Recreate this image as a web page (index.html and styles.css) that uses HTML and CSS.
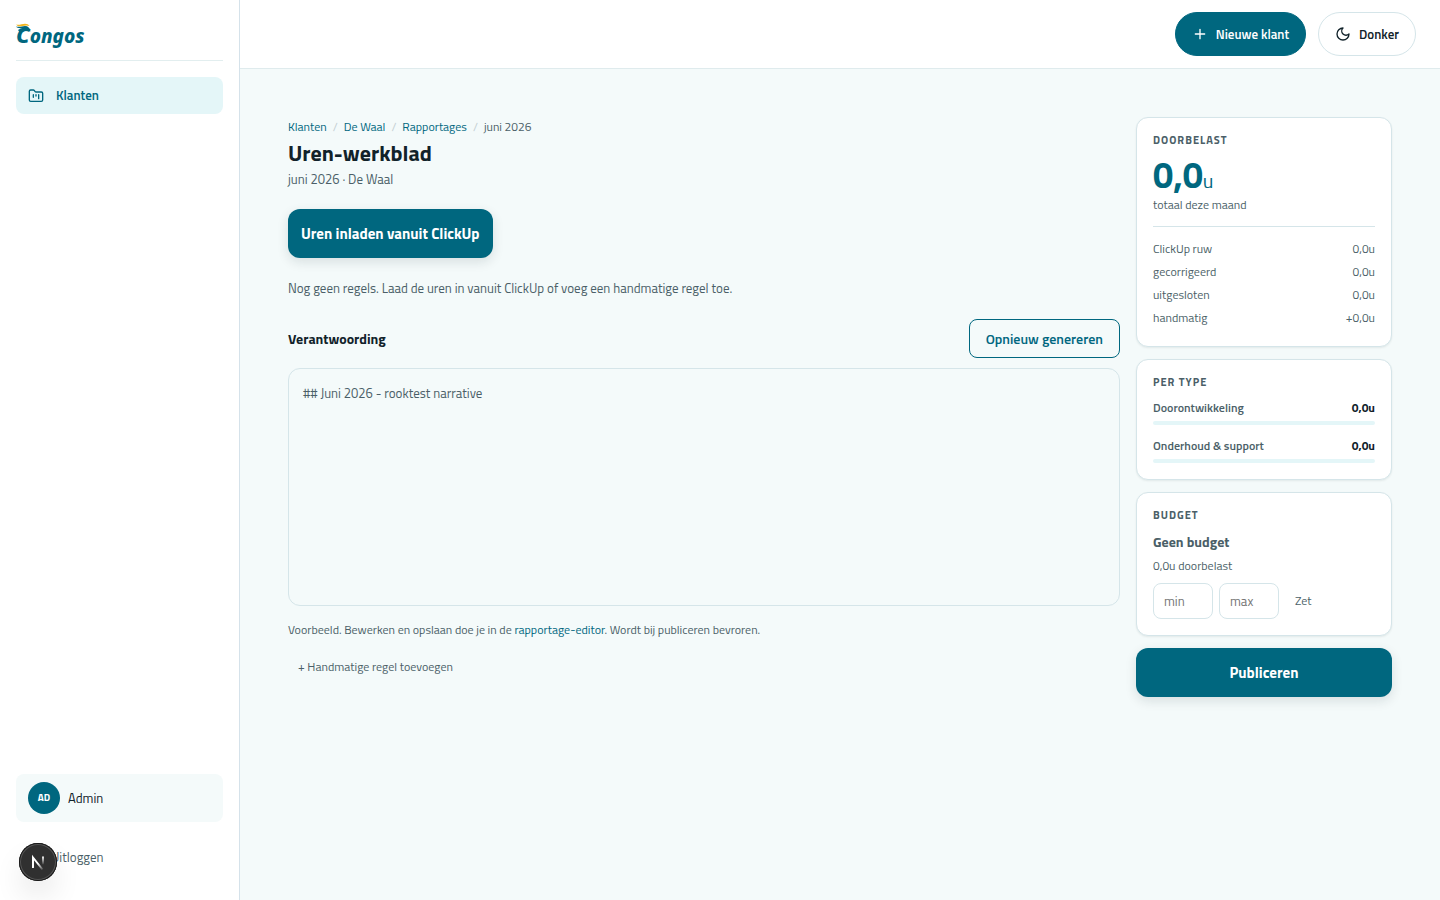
FILE: index.html
```html
<!DOCTYPE html>
<html lang="nl">
<head>
<meta charset="utf-8">
<meta name="viewport" content="width=device-width, initial-scale=1">
<title>Uren-werkblad</title>
<link rel="stylesheet" href="styles.css">
</head>
<body>
<div class="app">
  <aside class="sidebar">
    <a class="brand" href="#" aria-label="Congos">
      <svg width="72" height="28" viewBox="0 0 72 28">
        <text class="brand-text" x="0" y="21"><tspan class="brand-initial">C</tspan>ongos</text>
        <path d="M0 4.500C3 5.500 6 4 9 4c3 0 5 2 5.500 5.500L12 8C8 7 6 8 3.500 10L2 8c2-1 3-1.500 4-2C3.500 6.500 1 6 0 4.500z" fill="#00677f"/>
        <path d="M0 2.500c3 1 6-.8 9-.8 2 0 3.500.8 4.500 2.300C11 3 9 3.500 6.500 4 4 4.500 1.500 4.500 0 2.500z" fill="#f2b51d"/>
      </svg>
    </a>
    <nav class="nav">
      <a class="nav-item" href="#">
        <svg class="icon" width="16" height="16" viewBox="0 0 24 24"><path d="M4 20h16a2 2 0 0 0 2-2V8a2 2 0 0 0-2-2h-7.930a2 2 0 0 1-1.660-.9l-.82-1.200A2 2 0 0 0 7.930 3H4a2 2 0 0 0-2 2v13c0 1.100.900 2 2 2Z"/><path d="M8 10v4M12 10v2M16 10v6"/></svg>
        <span>Klanten</span>
      </a>
    </nav>
    <div class="account">
      <div class="user"><span class="avatar">AD</span><span>Admin</span></div>
      <button class="logout" type="button">Uitloggen</button>
    </div>
    <button class="dev-badge" type="button" aria-label="Next.js">
      <svg width="38" height="38" viewBox="0 0 38 38">
        <defs>
          <linearGradient id="diagonal" x1="20" y1="20" x2="25" y2="27" gradientUnits="userSpaceOnUse"><stop stop-color="#fff"/><stop offset="1" stop-color="#fff" stop-opacity="0"/></linearGradient>
          <linearGradient id="stem" x1="0" y1="13" x2="0" y2="22" gradientUnits="userSpaceOnUse"><stop stop-color="#fff"/><stop offset="1" stop-color="#fff" stop-opacity="0"/></linearGradient>
        </defs>
        <path d="M14 25V14.500l9.500 12" fill="none" stroke="url(#diagonal)" stroke-width="2"/>
        <path d="M24 13.500v8" stroke="url(#stem)" stroke-width="2"/>
      </svg>
    </button>
  </aside>
  <div class="page">
    <header class="topbar">
      <button class="pill pill-primary" type="button">
        <svg class="icon" width="16" height="16" viewBox="0 0 24 24"><path d="M5 12h14M12 5v14"/></svg>
        Nieuwe klant
      </button>
      <button class="pill" type="button">
        <svg class="icon" width="16" height="16" viewBox="0 0 24 24"><path d="M12 3a6 6 0 0 0 9 9 9 9 0 1 1-9-9Z"/></svg>
        Donker
      </button>
    </header>
    <main class="content">
      <section class="sheet">
        <nav class="crumbs" aria-label="Kruimelpad">
          <a href="#">Klanten</a><span class="slash">/</span><a href="#">De Waal</a><span class="slash">/</span><a href="#">Rapportages</a><span class="slash">/</span><span>juni 2026</span>
        </nav>
        <h1 class="title">Uren-werkblad</h1>
        <p class="subtitle">juni 2026 · De Waal</p>
        <button class="button load" type="button">Uren inladen vanuit ClickUp</button>
        <p class="empty">Nog geen regels. Laad de uren in vanuit ClickUp of voeg een handmatige regel toe.</p>
        <div class="section-head">
          <label class="section-title" for="narrative">Verantwoording</label>
          <button class="outline" type="button">Opnieuw genereren</button>
        </div>
        <textarea class="narrative" id="narrative" readonly>## Juni 2026 - rooktest narrative</textarea>
        <p class="hint">Voorbeeld. Bewerken en opslaan doe je in de <a href="#">rapportage-editor</a>. Wordt bij publiceren bevroren.</p>
        <button class="ghost" type="button">+ Handmatige regel toevoegen</button>
      </section>
      <aside class="summary">
        <section class="card">
          <h2 class="card-title">DOORBELAST</h2>
          <p class="total">0,0<span>u</span></p>
          <p class="note">totaal deze maand</p>
          <dl class="breakdown">
            <div class="row"><dt>ClickUp ruw</dt><dd>0,0u</dd></div>
            <div class="row"><dt>gecorrigeerd</dt><dd>0,0u</dd></div>
            <div class="row"><dt>uitgesloten</dt><dd>0,0u</dd></div>
            <div class="row"><dt>handmatig</dt><dd>+0,0u</dd></div>
          </dl>
        </section>
        <section class="card">
          <h2 class="card-title">PER TYPE</h2>
          <div class="type"><div class="row"><span>Doorontwikkeling</span><b>0,0u</b></div><div class="track"></div></div>
          <div class="type"><div class="row"><span>Onderhoud &amp; support</span><b>0,0u</b></div><div class="track"></div></div>
        </section>
        <section class="card">
          <h2 class="card-title">BUDGET</h2>
          <p class="budget">Geen budget</p>
          <p class="note">0,0u doorbelast</p>
          <form class="range">
            <input class="field" type="text" inputmode="numeric" placeholder="min" aria-label="Minimum">
            <input class="field" type="text" inputmode="numeric" placeholder="max" aria-label="Maximum">
            <button class="ghost" type="button">Zet</button>
          </form>
        </section>
        <button class="button" type="button">Publiceren</button>
      </aside>
    </main>
  </div>
</div>
</body>
</html>
```
FILE: styles.css
```css
* { box-sizing: border-box; }
:root {
  --teal: #00677f;
  --ink: #11222a;
  --muted: #4b5f68;
  --line: #d5e5e9;
  --tint: #e4f6f8;
  --ground: #f4fafa;
}
body {
  margin: 0;
  color: var(--ink);
  background: var(--ground);
  font: 13px/20px "Titillium Web", Lato, "Open Sans", sans-serif;
}
h1, h2, p, dl, dd { margin: 0; }
a { color: var(--teal); text-decoration: none; }
button, input, textarea { font: inherit; color: inherit; }
button { border: 0; background: none; padding: 0; white-space: nowrap; cursor: pointer; }
.icon { fill: none; stroke: currentColor; stroke-width: 2; stroke-linecap: round; stroke-linejoin: round; flex: none; }

.app { display: flex; min-height: 100vh; }
.sidebar {
  position: sticky;
  top: 0;
  display: flex;
  flex-direction: column;
  flex: none;
  width: 240px;
  height: 100vh;
  padding: 22px 16px;
  background: #fff;
  border-right: 1px solid #d5e2ea;
}
.brand { display: flex; padding-bottom: 10px; border-bottom: 1px solid #e2eeef; }
.brand-text { font: italic 800 19px "Noto Sans", sans-serif; fill: var(--teal); }
.brand-initial { font-size: 22px; }
.nav { padding-top: 16px; }
.nav-item {
  display: flex;
  align-items: center;
  gap: 12px;
  padding: 8px 12px;
  line-height: 21px;
  font-weight: 600;
  background: var(--tint);
  border-radius: 8px;
}
.account { display: flex; flex-direction: column; gap: 15px; margin-top: auto; padding-bottom: 1px; }
.user {
  display: flex;
  align-items: center;
  gap: 8px;
  padding: 8px 12px;
  background: var(--ground);
  border-radius: 8px;
}
.avatar {
  display: grid;
  place-items: center;
  width: 32px;
  height: 32px;
  color: #fff;
  background: var(--teal);
  border-radius: 50%;
  font-size: 10px;
  font-weight: 700;
}
.logout { padding: 10px 35px; color: var(--muted); text-align: left; }
.dev-badge {
  position: absolute;
  left: 19px;
  bottom: 19px;
  width: 38px;
  height: 38px;
  background: #303030;
  border-radius: 50%;
  box-shadow: inset 0 0 0 1px #171717, inset 0 0 0 2px #555, 0 16px 32px -8px rgba(0, 0, 0, .24);
}
.page { flex: 1; min-width: 0; }
.topbar {
  display: flex;
  justify-content: flex-end;
  gap: 12px;
  padding: 12px 24px;
  background: #fff;
  border-bottom: 1px solid #dfebed;
}
.pill {
  display: flex;
  align-items: center;
  gap: 8px;
  height: 44px;
  padding: 0 16px;
  border: 1px solid var(--line);
  border-radius: 22px;
  font-weight: 600;
}
.pill-primary { color: #fff; background: var(--teal); border-color: var(--teal); }

.content {
  display: grid;
  grid-template-columns: minmax(0, 1fr) 256px;
  gap: 16px;
  align-items: start;
  padding: 48px;
}
.sheet { display: flex; flex-direction: column; align-items: flex-start; }
.crumbs { display: flex; gap: 6px; font-size: 12px; color: var(--muted); }
.slash { color: #c3cfd2; }
.title { font-size: 22px; line-height: 32px; font-weight: 700; }
.subtitle { color: var(--muted); }
.button {
  height: 49px;
  color: #fff;
  background: var(--teal);
  border-radius: 12px;
  box-shadow: 0 4px 12px rgba(17, 34, 42, .12);
  font-size: 15px;
  font-weight: 700;
}
.load { margin: 20px 0; padding: 0 13px; }
.empty { color: var(--muted); }
.section-head {
  display: flex;
  align-items: center;
  justify-content: space-between;
  align-self: stretch;
  margin: 21px 0 10px;
}
.section-title { font-size: 14px; font-weight: 700; }
.outline {
  height: 39px;
  padding: 0 16px;
  color: var(--teal);
  border: 1px solid var(--teal);
  border-radius: 8px;
  font-size: 14px;
  font-weight: 600;
}
.narrative {
  display: block;
  width: 100%;
  height: 238px;
  padding: 14px;
  color: var(--muted);
  background: transparent;
  border: 1px solid var(--line);
  border-radius: 12px;
  outline: 0;
  resize: none;
}
.hint { margin-top: 14px; font-size: 12px; color: var(--muted); }
.ghost { padding: 8px 10px; font-size: 12px; color: var(--muted); }
.hint + .ghost { margin-top: 9px; }

.summary { display: flex; flex-direction: column; gap: 12px; }
.card {
  padding: 12px 16px 16px;
  background: #fff;
  border: 1px solid var(--line);
  border-radius: 12px;
  box-shadow: 0 1px 2px rgba(17, 34, 42, .08);
  font-size: 12px;
  color: var(--muted);
}
.card-title { font-size: 11px; font-weight: 700; letter-spacing: 1px; }
.total { margin: 6px 0 2px; color: var(--teal); font-size: 36px; line-height: 37px; font-weight: 700; }
.total span { font-size: 20px; line-height: 20px; font-weight: 400; }
.breakdown { margin-top: 11px; padding: 10px 0 1px; border-top: 1px solid var(--line); }
.row { display: flex; justify-content: space-between; }
.breakdown .row { line-height: 23px; }
.type { font-weight: 600; }
.type .row { padding-top: 6px; }
.type + .type { padding-top: 5px; }
.type b { color: var(--ink); font-weight: 700; }
.track { height: 4px; margin-top: 3px; background: var(--tint); border-radius: 2px; }
.budget { margin: 7px 0 4px; font-size: 14px; font-weight: 700; }
.range { display: flex; gap: 6px; margin-top: 7px; }
.field {
  width: 60px;
  height: 36px;
  padding: 0 10px;
  background: #fff;
  border: 1px solid var(--line);
  border-radius: 8px;
  font-size: 13px;
}
.field::placeholder { color: #757575; opacity: 1; }

@media (max-width: 900px) {
  .content { grid-template-columns: 1fr; padding: 24px; }
}
```
